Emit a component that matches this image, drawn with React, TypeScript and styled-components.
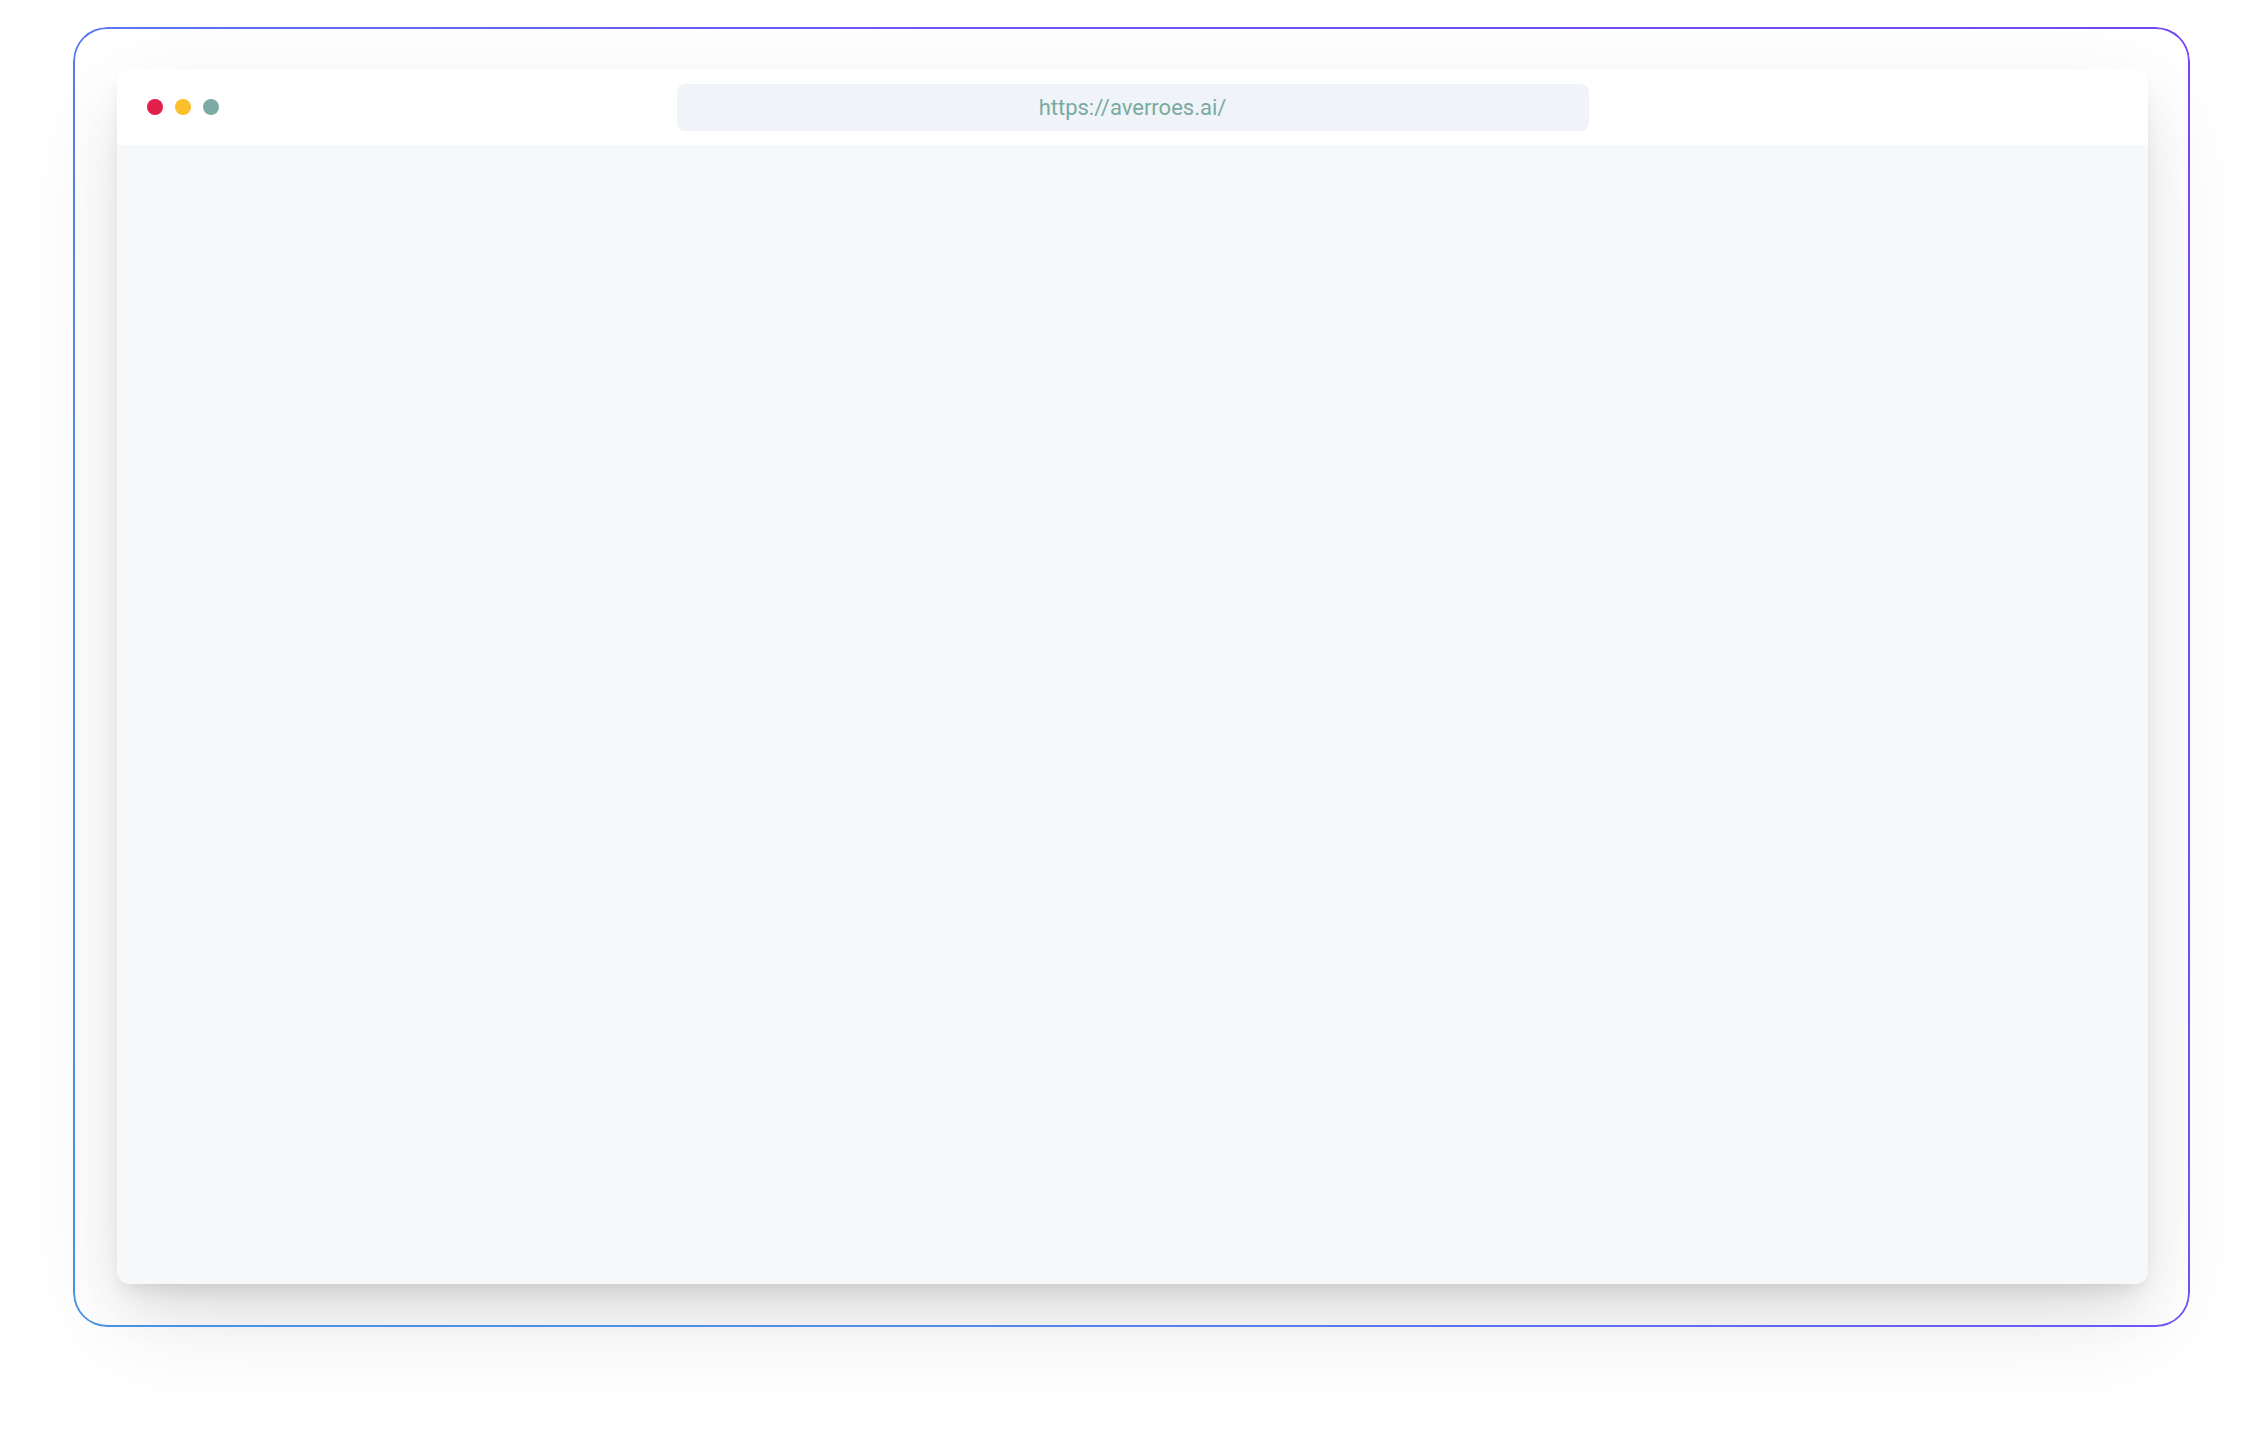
import styled, { createGlobalStyle } from "styled-components";

const GlobalStyle = createGlobalStyle`
  html, body {
    margin: 0;
    padding: 0;
    background: #ffffff;
  }
  body {
    font-family: Roboto, "Liberation Sans", Arial, sans-serif;
  }
  * {
    box-sizing: border-box;
  }
`;

const Page = styled.div`
  width: 2263px;
  height: 1446px;
  padding: 27px 73px 119px 73px;
  display: flex;
  background: #ffffff;
`;

// outer outline with a blue -> violet gradient ring
const Frame = styled.div`
  position: relative;
  flex: 1;
  display: flex;
  padding: 42px 42px 43px 44px;
  border-radius: 34px;

  &::after {
    content: "";
    position: absolute;
    inset: 0;
    border-radius: 34px;
    padding: 2px;
    background: linear-gradient(
      45deg,
      #4893e2 0%,
      #528cea 25%,
      #5c74f0 40%,
      #6c56f5 62%,
      #7446f6 100%
    );
    -webkit-mask: linear-gradient(#000 0 0) content-box, linear-gradient(#000 0 0);
    -webkit-mask-composite: xor;
    mask-composite: exclude;
    pointer-events: none;
    z-index: 2;
  }
`;

const Window = styled.div`
  flex: 1;
  display: flex;
  flex-direction: column;
  border-radius: 13px;
  overflow: hidden;
  background: #f7f8fa;
  box-shadow:
    0 10px 18px -6px rgba(0, 0, 0, 0.1),
    0 30px 50px -10px rgba(0, 0, 0, 0.08),
    0 36px 110px rgba(0, 0, 0, 0.09);
`;

const TitleBar = styled.div`
  height: 76px;
  flex: none;
  display: grid;
  grid-template-columns: 1fr 912px 1fr;
  align-items: center;
  background: #ffffff;
`;

const Dots = styled.div`
  display: flex;
  align-items: center;
  gap: 12px;
  padding-left: 30px;
`;

const Dot = styled.span<{ $color: string }>`
  width: 16px;
  height: 16px;
  border-radius: 50%;
  background: ${(p) => p.$color};
`;

const UrlBar = styled.div`
  height: 47px;
  border-radius: 8px;
  background: #f0f4f8;
  display: flex;
  align-items: center;
  justify-content: center;
  color: #78aaa1;
  font-family: Roboto, "Liberation Sans", Arial, sans-serif;
  font-size: 22px;
  font-weight: 400;
`;

const Content = styled.div`
  flex: 1;
  background: #f7f8fa;
`;

export default function App() {
  return (
    <>
      <GlobalStyle />
      <Page>
        <Frame>
          <Window>
            <TitleBar>
              <Dots>
                <Dot $color="#e11f4a" />
                <Dot $color="#fdbf2b" />
                <Dot $color="#7baba3" />
              </Dots>
              <UrlBar>https://averroes.ai/</UrlBar>
              <div />
            </TitleBar>
            <Content />
          </Window>
        </Frame>
      </Page>
    </>
  );
}
